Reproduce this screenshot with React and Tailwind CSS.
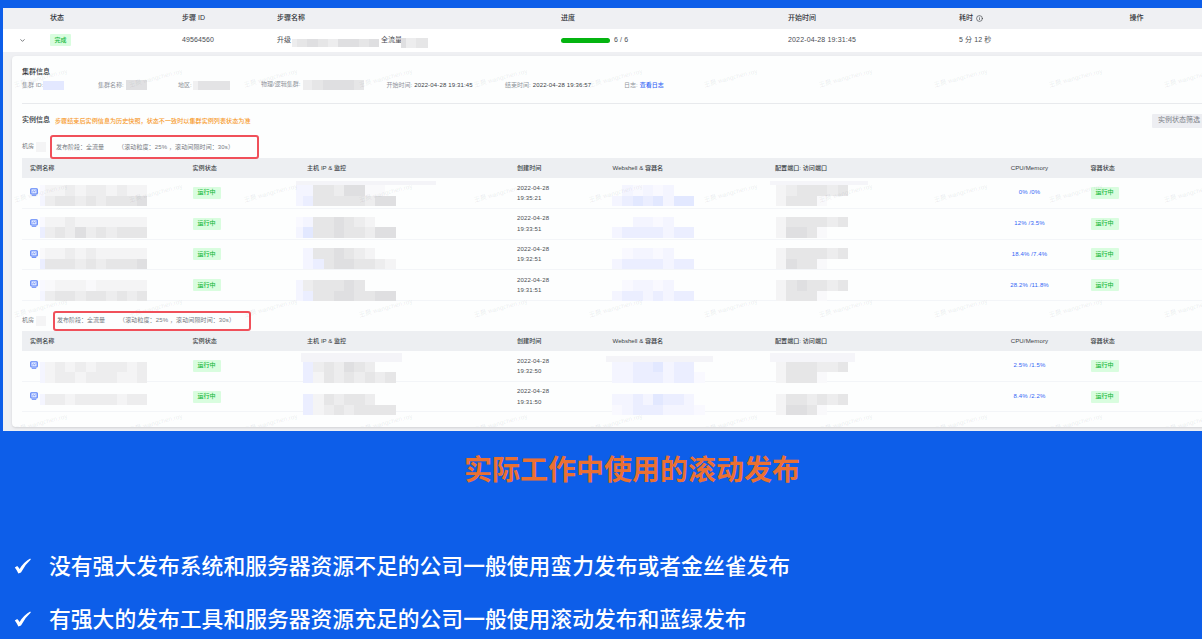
import React from 'react';
import clsx from 'clsx';
import { ChevronDown, Info } from 'lucide-react';

// Shades used by the masked (mosaic) cells
const SHADES = {
  a: 'bg-[#f9f9fb]',
  b: 'bg-[#f4f4f5]',
  c: 'bg-[#ededee]',
  d: 'bg-[#e6e6e7]',
  e: 'bg-[#dfdfe1]',
  s: 'bg-[#f9f9ff]',
  u: 'bg-[#f4f5ff]',
  v: 'bg-[#ebeeff]',
  w: 'bg-[#e2e8ff]',
};

const tables = [
  {
    id: 'first',
    percent: '25%',
    rows: [
      {
        time: '19:35:21', usage: '0% /0%', top: 7.3,
        name: ['sbbcbccbcbb', 'ucddcdcddde'],
        host: ['uuddceeaa ', 'uvdddddcee'],
        shell: [' ususu', 'uvwvwuww'],
        config: ['bcdddcd', 'bddda'],
        strips: true,
      },
      {
        time: '19:33:51', usage: '12% /3.5%', top: 8.3,
        name: ['sbbcbbbbbbb', 'vcdcecdcddd'],
        host: ['suddedcb', 'uwddeddcee'],
        shell: ['  uusu', 'uvvvvuvv'],
        config: ['bddddcd', 'beeda'],
      },
      {
        time: '19:32:51', usage: '18.4% /7.4%', top: 8.7,
        name: ['abbcbcbbbbb', 'vdddcdcddde'],
        host: [' uddedcb', ' uvdeeddcb'],
        shell: [' suusu', 'uvvvvuvv'],
        config: ['bddddcd', 'bedda'],
      },
      {
        time: '19:31:51', usage: '28.2% /11.8%', top: 10,
        name: ['sabbbabbbbb', 'ucddcddcdcd'],
        host: ['ucddded', 'uvddeeddee'],
        shell: [' suusu', 'uvvuvuvv'],
        config: ['bdeddcd', 'bddda'],
      },
    ],
  },
  {
    id: 'second',
    percent: '25%',
    rows: [
      {
        time: '19:32:50', usage: '2.5% /1.5%', top: 11,
        name: ['ubcbcbcccbc', 'ubccbcccbbc'],
        host: [' vcdcedc', ' vbdcdcdcd'],
        shell: ['uuvvwuvv', 'uuvvvuvvs'],
        config: ['bdddccd', 'bddda'],
        strips: true,
      },
      {
        time: '19:31:50', usage: '8.4% /2.2%', top: 12.5,
        name: ['uccbccccbcc'],
        host: [' vbdcddc', ' vbcdcdddd'],
        shell: ['uuvuwvvu', 'suvvvuuus'],
        config: ['bddcdcd', 'beeda'],
      },
    ],
  },
];

const Mosaic = ({ rows, lead, top, className }) => (
  <div className={clsx('self-start shrink-0', className)} style={{ marginTop: top }}>
    {rows.map((row, r) => (
      <div key={r} className="flex h-[10.3px]">
        {row.split('').map((cell, i) => (
          <span key={i} className={clsx('shrink-0', i === 0 && lead ? lead : 'w-[10.3px]', SHADES[cell])} />
        ))}
      </div>
    ))}
  </div>
);

const MonitorIcon = () => (
  <svg className="w-2 h-2 shrink-0" viewBox="0 0 16 16" fill="none" stroke="#5b82f7" strokeWidth="2.4">
    <rect x="1.5" y="1.5" width="13" height="10.5" rx="1.5" fill="#dde6ff" />
    <path d="M4.5 8.2L7 6l2 1.5L11.5 5" strokeWidth="1.6" />
    <path d="M3.5 14.5h9" />
  </svg>
);

const Badge = ({ children, className }) => (
  <span className={clsx('inline-flex h-3 items-center justify-center rounded-[1px] bg-[#d9fddf] text-[6px] font-medium text-[#16b83c]', className)}>
    {children}
  </span>
);

const Redacted = ({ className }) => <span className={clsx('inline-block shrink-0', className)} />;

const TableHeader = () => (
  <div className="flex h-[20.3px] items-center bg-[#edeff2] pl-2 text-[6.1px] font-medium text-[#3b3f46]">
    <div className="w-[162.5px] shrink-0">实例名称</div>
    <div className="w-[114.5px] shrink-0">实例状态</div>
    <div className="w-[210px] shrink-0">主机 IP &amp; 监控</div>
    <div className="w-[95.5px] shrink-0">创建时间</div>
    <div className="w-[162.5px] shrink-0">Webshell &amp; 容器名</div>
    <div className="w-[225px] shrink-0">配置端口: 访问端口</div>
    <div className="w-[59px] shrink-0 text-center tracking-[0.1px]">CPU/Memory</div>
    <div className="ml-[31.5px] shrink-0">容器状态</div>
  </div>
);

const InstanceRow = ({ row, tall }) => (
  <div className="flex h-[30.75px] items-center border-b border-[#f3f5f8] pl-2 text-[6px]">
    <div className="flex h-full w-[162.5px] shrink-0">
      <div className="pt-2.5">
        <MonitorIcon />
      </div>
      <Mosaic rows={row.name} top={row.top} lead="w-[4.5px]" className="ml-0.5" />
    </div>
    <div className="w-[103.5px] shrink-0">
      <Badge className="w-7">运行中</Badge>
    </div>
    <div className="relative h-full w-[221px] shrink-0">
      {row.strips && <Redacted className={clsx('absolute left-0 bg-[#f4f4f8]', tall ? 'top-0.5 ml-[5px] h-[9px] w-[101px]' : 'top-[3px] h-1 w-[140px]')} />}
      <Mosaic rows={row.host} top={row.top} lead="w-[7px]" />
    </div>
    <div className="w-[95px] shrink-0 leading-[10.3px] tracking-[0.15px] text-[#4a4d52]">
      <div>2022-04-28</div>
      <div>{row.time}</div>
    </div>
    <div className="relative h-full w-[164px] shrink-0">
      {row.strips && tall && <Redacted className="absolute -left-1.5 top-[5px] h-[6px] w-[107px] bg-[#f4f4f8]" />}
      <Mosaic rows={row.shell} top={row.top} />
    </div>
    <div className="relative h-full w-[224px] shrink-0">
      {row.strips && <Redacted className={clsx('absolute -left-1.5 bg-[#f5f5f9]', tall ? 'top-0.5 h-[9px] w-[85px]' : 'top-[3px] h-1 w-[98px]')} />}
      <Mosaic rows={row.config} top={row.top} />
    </div>
    <div className="w-[59px] shrink-0 text-center tracking-[0.15px] text-[#3265f5]">{row.usage}</div>
    <div className="ml-[31.5px] shrink-0">
      <Badge className="w-7">运行中</Badge>
    </div>
  </div>
);

const InstanceTable = ({ table, tall }) => (
  <div>
    <div className={clsx('flex items-center text-[6px] text-[#777b82]', tall ? 'h-[29.6px] pt-2.5' : 'h-[25.3px] pt-[3px]')}>
      <div className="flex w-0 shrink-0 items-center whitespace-nowrap">
        机房
        <Redacted className="ml-0.5 h-2.5 w-2.5 bg-[#f4f4f5]" />
      </div>
      <div
        className={clsx(
          'relative z-10 flex shrink-0 items-center whitespace-pre rounded-[3px] border-2 border-[#f0505a]',
          tall ? 'ml-[31px] h-5 w-[198px] pl-0.5' : 'ml-7 h-6 w-[209px] pl-1 pt-0.5'
        )}
      >
        <span>发布阶段：全流量</span>
        <span className="ml-3.5 tracking-[0.12px]">（滚动粒度：{table.percent} ，滚动间隔时间：30s）</span>
      </div>
    </div>
    <TableHeader />
    {table.rows.map((row) => (
      <InstanceRow key={row.time} row={row} tall={tall} />
    ))}
  </div>
);

const Watermark = () => (
  <div className="pointer-events-none absolute -left-[3px] top-0 grid w-[1265px] grid-cols-[repeat(11,115px)] auto-rows-[115px] pt-[17px] text-[6.5px] text-[#5b6070]/12">
    {Array.from({ length: 44 }, (_, i) => (
      <span key={i} className="w-16 -rotate-[15deg] self-start whitespace-nowrap pl-1">
        王晨 wangchen.roy
      </span>
    ))}
  </div>
);

const Field = ({ label, children, className }) => (
  <div className={clsx('flex shrink-0 items-center whitespace-nowrap', className)}>
    <span className="text-[#90949c]">{label}</span>
    {children}
  </div>
);

const CheckMark = () => (
  <svg className="-mt-0.5 h-4 w-[17px] shrink-0" viewBox="0 0 17 16" fill="#fff">
    <path d="M0.8 9.4L3.2 7.9Q4.8 9.2 5.6 10.9Q9.8 4.2 16.2 0.6L16.8 1.4Q10.8 6.6 7 14.4L4.4 15.6Q3 12 0.8 9.4Z" />
  </svg>
);

const StepsPanel = () => (
  <div className="ml-[3px] h-[422.5px] overflow-hidden bg-[#eff0f3]">
    <div className="flex h-[21px] items-center pl-[47px] text-[7px] font-medium text-[#303338]">
      <div className="w-[132px] shrink-0">状态</div>
      <div className="w-[95px] shrink-0">步骤 ID</div>
      <div className="w-[284px] shrink-0">步骤名称</div>
      <div className="w-[227px] shrink-0">进度</div>
      <div className="w-[171px] shrink-0">开始时间</div>
      <div className="flex w-[170.5px] shrink-0 items-center gap-[3px]">
        耗时
        <Info className="h-[7px] w-[7px]" strokeWidth={2} />
      </div>
      <div className="shrink-0">操作</div>
    </div>

    <div className="flex h-[22.5px] items-center bg-white pl-4 text-[7px] text-[#4a4d52]">
      <div className="w-[31px] shrink-0">
        <ChevronDown className="h-[7px] w-[7px]" strokeWidth={2.5} />
      </div>
      <div className="flex w-[132px] shrink-0">
        <Badge className="w-[21px]">完成</Badge>
      </div>
      <div className="w-[95px] shrink-0 tracking-[0.12px]">49564560</div>
      <div className="flex w-[284px] shrink-0 items-center">
        升级
        <Mosaic rows={['cdedceeded']} top={6.5} lead="w-[5px]" className="ml-px mr-0.5 h-2 w-[87px] overflow-hidden" />
        全流量
        <Mosaic rows={['ecdd']} top={5} lead="w-[5px]" className="-ml-px w-[27px] overflow-hidden" />
      </div>
      <div className="flex w-[227px] shrink-0 items-center gap-1 tracking-[0.12px]">
        <span className="h-[5px] w-[49px] rounded-full bg-[#04b410]" />
        6 / 6
      </div>
      <div className="w-[171px] shrink-0 tracking-[0.16px]">2022-04-28 19:31:45</div>
      <div className="shrink-0 tracking-[0.1px]">5 分 12 秒</div>
    </div>

    <div className="relative ml-[9px] mt-1 h-[371px] w-[1200px] overflow-hidden rounded-sm bg-[#fdfefe] pl-2.5 pt-2.5 shadow">
      <div className="h-[11px] text-[7px] font-medium leading-[11px] text-[#303338]">集群信息</div>
      <div className="flex h-[17px] items-center text-[6px] text-[#3b3f46]">
        <Field label="集群 ID:" className="w-[76px]">
          <Redacted className="h-[9px] w-[21px] bg-[#e3e8ff]" />
        </Field>
        <Field label="集群名称:" className="w-20">
          <Redacted className="ml-0.5 h-2.5 w-[21px] bg-[#e0e0e2]" />
        </Field>
        <Field label="地区:" className="w-[83px]">
          <Redacted className="ml-px h-[9px] w-[5px] bg-[#f0f0f1]" />
          <Redacted className="h-[9px] w-8 bg-[#e3e3e5]" />
        </Field>
        <Field label="物理/逻辑集群:" className="w-[125.5px]">
          <Mosaic rows={['cdeeed']} top={0} lead="w-[9px]" className="ml-[3px]" />
        </Field>
        <Field label="开始时间:" className="w-[118.5px]">
          <span className="ml-0.5 tracking-[0.15px]">2022-04-28 19:31:45</span>
        </Field>
        <Field label="结束时间:" className="w-[119px]">
          <span className="ml-0.5 tracking-[0.15px]">2022-04-28 19:36:57</span>
        </Field>
        <Field label="日志:">
          <span className="ml-0.5 font-medium text-[#3265f5]">查看日志</span>
        </Field>
      </div>
      <div className="mt-[9px] h-px bg-[#e8eaed]" />

      <div className="mt-[9px] flex h-4 items-center">
        <span className="text-[7px] font-medium text-[#303338]">实例信息</span>
        <span className="ml-[5px] text-[6.12px] font-medium text-[#f79a2d]">
          步骤结束后实例信息为历史快照，状态不一致时以集群实例列表状态为准
        </span>
        <span className="ml-auto mr-0.5 flex h-3.5 w-[58px] items-center rounded-[1px] bg-[#edeef2] pl-1.5 text-[7px] text-[#7c8087]">
          实例状态筛选
        </span>
      </div>
      <div className="mt-1">
        {tables.map((table, i) => (
          <InstanceTable key={table.id} table={table} tall={i > 0} />
        ))}
      </div>
      <Watermark />
    </div>
  </div>
);

export default function App() {
  return (
    <div className="h-[639px] w-[1202px] overflow-hidden bg-[#0d5ee9] pt-2 font-['Liberation_Sans','Noto_Sans_CJK_SC',sans-serif]">
      <StepsPanel />
      <h1 className="mt-5 pl-[62px] text-center text-[28px] font-bold leading-10 text-[#ea7032]">
        实际工作中使用的滚动发布
      </h1>
      <ul className="mt-[50px] pl-3.5 text-[21.8px] font-medium text-white">
        <li className="flex h-[53px] items-center gap-[18px]">
          <CheckMark />
          没有强大发布系统和服务器资源不足的公司一般使用蛮力发布或者金丝雀发布
        </li>
        <li className="flex h-[53px] items-center gap-[18px]">
          <CheckMark />
          有强大的发布工具和服务器资源充足的公司一般使用滚动发布和蓝绿发布
        </li>
      </ul>
    </div>
  );
}
